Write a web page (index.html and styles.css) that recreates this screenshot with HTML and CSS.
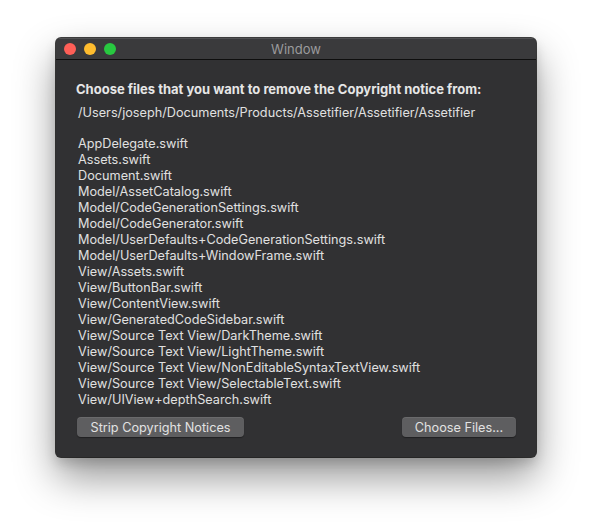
FILE: index.html
```html
<!DOCTYPE html>
<html>
<head>
<meta charset="utf-8">
<link rel="stylesheet" href="styles.css">
</head>
<body>
<div class="window">
  <div class="titlebar">
    <div class="lights">
      <span class="light red"></span>
      <span class="light yellow"></span>
      <span class="light green"></span>
    </div>
    <div class="title">Window</div>
  </div>
  <div class="content">
    <div class="heading">Choose files that you want to remove the Copyright notice from:</div>
    <div class="path">/Users/joseph/Documents/Products/Assetifier/Assetifier/Assetifier</div>
    <ul class="files">
      <li>AppDelegate.swift</li>
      <li>Assets.swift</li>
      <li>Document.swift</li>
      <li>Model/AssetCatalog.swift</li>
      <li>Model/CodeGenerationSettings.swift</li>
      <li>Model/CodeGenerator.swift</li>
      <li>Model/UserDefaults+CodeGenerationSettings.swift</li>
      <li>Model/UserDefaults+WindowFrame.swift</li>
      <li>View/Assets.swift</li>
      <li>View/ButtonBar.swift</li>
      <li>View/ContentView.swift</li>
      <li>View/GeneratedCodeSidebar.swift</li>
      <li>View/Source Text View/DarkTheme.swift</li>
      <li>View/Source Text View/LightTheme.swift</li>
      <li>View/Source Text View/NonEditableSyntaxTextView.swift</li>
      <li>View/Source Text View/SelectableText.swift</li>
      <li>View/UIView+depthSearch.swift</li>
    </ul>
    <div class="buttons">
      <button class="btn strip">Strip Copyright Notices</button>
      <button class="btn choose">Choose Files...</button>
    </div>
  </div>
</div>
</body>
</html>
```

FILE: styles.css
```css
html, body {
  margin: 0;
  padding: 0;
  background: #ffffff;
}
body {
  width: 592px;
  height: 531px;
  overflow: hidden;
  padding-top: 38px;
  box-sizing: border-box;
  font-family: "Inter", "Liberation Sans", sans-serif;
}
.window {
  width: 480px;
  height: 419px;
  margin: 0 auto;
  background: #313133;
  border-radius: 5px;
  box-shadow: 0 0 0 1px rgba(0,0,0,0.75), 0 20px 40px rgba(0,0,0,0.42), 0 6px 12px rgba(0,0,0,0.15);
  display: flex;
  flex-direction: column;
  overflow: hidden;
}
.titlebar {
  height: 21px;
  flex: none;
  background: #3a3a3c;
  border-bottom: 1px solid #0e0e0e;
  box-shadow: inset 0 1px 0 rgba(255,255,255,0.12);
  display: flex;
  align-items: center;
  position: relative;
}
.lights {
  display: flex;
  gap: 8px;
  padding-left: 8px;
}
.light {
  width: 12px;
  height: 12px;
  border-radius: 50%;
  display: block;
}
.red { background: #fe5f57; }
.yellow { background: #febc2e; }
.green { background: #28c840; }
.title {
  position: absolute;
  left: 0;
  right: 0;
  text-align: center;
  color: #9b9b9d;
  font-size: 13px;
  top: 3px;
}
.content {
  padding: 21px 20px 0 20px;
  color: #e0e0e0;
  font-size: 12.7px;
}
.heading {
  font-weight: 700;
  font-size: 13px;
  color: #e6e6e6;
  line-height: 16px;
}
.path {
  margin-top: 8px;
  padding-left: 2px;
  line-height: 16px;
}
.files {
  list-style: none;
  margin: 15px 0 0 0;
  padding: 0 0 0 2px;
  line-height: 16px;
}
.buttons {
  display: flex;
  justify-content: space-between;
  margin-top: 9px;
  padding-left: 1px;
}
.btn {
  font-family: inherit;
  font-size: 12.7px;
  color: #e2e2e2;
  background: #5e5e60;
  border: none;
  border-radius: 4px;
  height: 20px;
  padding: 0;
  box-shadow: 0 1px 1px rgba(0,0,0,0.35), inset 0 1px 0 rgba(255,255,255,0.08);
}
.strip { width: 167px; }
.choose { width: 114px; }
```
